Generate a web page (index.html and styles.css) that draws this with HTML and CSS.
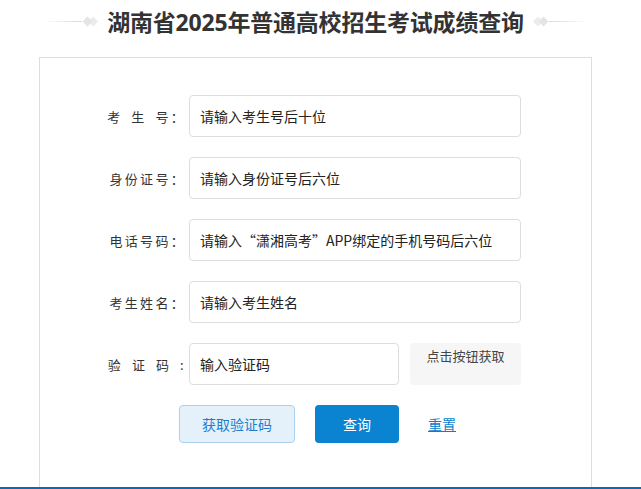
FILE: index.html
```html
<!DOCTYPE html>
<html>
  <head>
    <title>成绩查询</title>
    <meta charset="UTF-8" />
    <link rel="stylesheet" href="styles.css">
  </head>

  <body>
    <div class="page">
      <div class="title">
        <span class="deco deco-left"><i></i><b></b></span>
        <h1>湖南省2025年普通高校招生考试成绩查询</h1>
        <span class="deco deco-right"><b></b><i></i></span>
      </div>

      <div class="card">
        <div class="row">
          <label class="label">考&ensp;生&ensp;号：</label>
          <input class="field" type="text" placeholder="请输入考生号后十位">
        </div>
        <div class="row">
          <label class="label">身份证号：</label>
          <input class="field" type="text" placeholder="请输入身份证号后六位">
        </div>
        <div class="row">
          <label class="label">电话号码：</label>
          <input class="field" type="text" placeholder="请输入“潇湘高考”APP绑定的手机号码后六位">
        </div>
        <div class="row">
          <label class="label">考生姓名：</label>
          <input class="field" type="text" placeholder="请输入考生姓名">
        </div>
        <div class="row">
          <label class="label">验&ensp;证&ensp;码&ensp;:</label>
          <div class="code-wrap">
            <input class="field code" type="text" placeholder="输入验证码">
            <div class="code-img">点击按钮获取</div>
          </div>
        </div>
        <div class="actions">
          <button class="btn btn-light">获取验证码</button>
          <button class="btn btn-primary">查询</button>
          <a class="reset" href="#">重置</a>
        </div>
      </div>
    </div>
    <div class="footer"></div>
  </body>
</html>
```

FILE: styles.css
```css
* {
  box-sizing: border-box;
  margin: 0;
  padding: 0;
}

body {
  background: #fff;
  font-family: "Noto Sans CJK SC", "Noto Sans", sans-serif;
  color: #333;
}

.page {
  padding-left: 39px;
  width: 592px;
}

.title {
  height: 57px;
  display: flex;
  align-items: center;
  justify-content: center;
  padding-bottom: 14px;
  white-space: nowrap;
}

.title h1 {
  font-family: "Noto Sans", "Noto Sans CJK SC", sans-serif;
  font-size: 23px;
  font-weight: 700;
  color: #333;
  letter-spacing: -0.2px;
  margin: 0 12px;
  line-height: 30px;
}

.deco {
  display: flex;
  align-items: center;
}

.deco i {
  display: block;
  width: 40px;
  height: 1px;
}

.deco-left i {
  background: linear-gradient(90deg, rgba(220, 220, 220, 0), #d8d8d8);
}

.deco-right i {
  background: linear-gradient(90deg, #d8d8d8, rgba(220, 220, 220, 0));
}

.deco b {
  display: block;
  width: 7px;
  height: 7px;
  background: #e4e4e4;
  transform: rotate(45deg);
}

.deco-left b {
  margin: 0 4px 0 2px;
  box-shadow: 4px -4px 0 #ececec;
}

.deco-right b {
  margin: 0 2px 0 4px;
  box-shadow: -4px 4px 0 #ececec;
}

.card {
  border: 1px solid #ddd;
  border-bottom: none;
  height: 430px;
  padding-top: 37px;
}

.row {
  display: flex;
  align-items: center;
  margin-bottom: 20px;
}

.label {
  width: 146px;
  text-align: right;
  font-size: 13px;
  letter-spacing: 2.3px;
  color: #333;
  margin-right: 3px;
  white-space: nowrap;
}

.field {
  width: 332px;
  height: 42px;
  border: 1px solid #ddd;
  border-radius: 4px;
  padding: 0 10px;
  font-size: 14px;
  font-family: "Noto Sans CJK SC", "Noto Sans", sans-serif;
  color: #333;
  outline: none;
}

.field::placeholder {
  color: #222;
}

.code-wrap {
  display: flex;
  gap: 11px;
}

.field.code {
  width: 210px;
}

.code-img {
  width: 111px;
  height: 42px;
  background: #f6f6f6;
  border-radius: 4px;
  font-size: 13px;
  color: #444;
  text-align: center;
  line-height: 26px;
}

.actions {
  display: flex;
  align-items: center;
  padding-left: 139px;
  gap: 20px;
}

.btn {
  height: 38px;
  border-radius: 4px;
  font-size: 14px;
  font-family: "Noto Sans CJK SC", "Noto Sans", sans-serif;
  cursor: pointer;
}

.btn-light {
  width: 116px;
  background: #e4f1fb;
  border: 1px solid #a9d2ef;
  color: #1d7fcc;
}

.btn-primary {
  width: 84px;
  background: #0a83d0;
  border: none;
  color: #fff;
}

.reset {
  margin-left: 9px;
  font-size: 14px;
  color: #0b7fcc;
  text-decoration: underline;
}

.footer {
  height: 3px;
  background: #0b6ab2;
}
```
